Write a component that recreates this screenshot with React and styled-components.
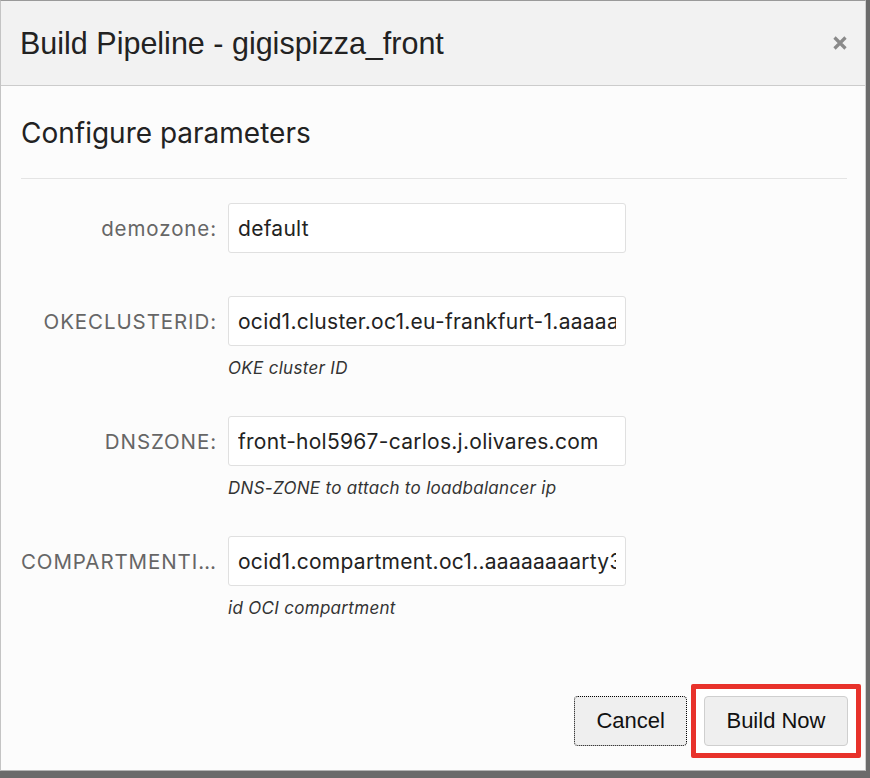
import React from "react";
import styled, { createGlobalStyle } from "styled-components";

const GlobalStyle = createGlobalStyle`
  html, body {
    margin: 0;
    padding: 0;
    background: #6b6b6b;
  }
  * {
    box-sizing: border-box;
  }
`;

const Dialog = styled.div`
  width: 866px;
  height: 771px;
  display: flex;
  flex-direction: column;
  background: #fcfcfc;
  border-left: 1px solid #c4c4c4;
  border-top: 1px solid #9a9a9a;
  border-bottom: 1px solid #b5b5b5;
  border-right: 1px solid #d0d0d0;
`;

const Header = styled.div`
  height: 85px;
  flex-shrink: 0;
  display: flex;
  align-items: center;
  justify-content: space-between;
  padding: 0 11px 0 19px;
  background: #f2f2f2;
  border-bottom: 1px solid #cccccc;
`;

const Title = styled.h1`
  margin: 0;
  font-family: "Liberation Sans", Arial, sans-serif;
  font-weight: 400;
  font-size: 30.5px;
  color: #222;
`;

const CloseButton = styled.button`
  width: 28px;
  height: 28px;
  padding: 0;
  border: none;
  background: transparent;
  display: flex;
  align-items: center;
  justify-content: center;
  cursor: pointer;
`;

const Body = styled.div`
  flex: 1;
  display: flex;
  flex-direction: column;
  padding: 30px 18px 0 20px;
`;

const SectionHead = styled.h2`
  margin: 0;
  font-family: Inter, "Noto Sans", sans-serif;
  font-weight: 400;
  font-size: 28px;
  line-height: 34px;
  color: #222;
`;

const Divider = styled.hr`
  margin: 28px 0 24px 0;
  border: none;
  border-top: 1px solid #e4e4e4;
`;

const Form = styled.div`
  display: flex;
  flex-direction: column;
`;

const FieldRow = styled.div`
  display: grid;
  grid-template-columns: 196px 398px;
  column-gap: 11px;
  align-items: center;
  margin-bottom: ${(p) => p.$space}px;
`;

const Label = styled.label`
  font-family: Inter, "Noto Sans", sans-serif;
  font-size: 20.5px;
  letter-spacing: 0.9px;
  color: #666;
  text-align: right;
  white-space: nowrap;
  overflow: hidden;
  text-overflow: ellipsis;
`;

const Input = styled.input`
  width: 100%;
  height: 50px;
  padding: 0 9px;
  background: #fff;
  border: 1px solid #e0e0e0;
  border-radius: 3px;
  font-family: Inter, "Noto Sans", sans-serif;
  font-size: 21px;
  letter-spacing: 0.27px;
  color: #222;
  outline: none;
`;

const Help = styled.div`
  grid-column: 2;
  margin-top: 10px;
  font-family: Inter, "Noto Sans", sans-serif;
  font-style: italic;
  font-size: 17px;
  letter-spacing: 0.3px;
  line-height: 24px;
  color: #333;
`;

const Footer = styled.div`
  flex-shrink: 0;
  display: flex;
  justify-content: flex-end;
  align-items: center;
  gap: 4px;
  padding: 0 4px 12px 0;
`;

const Button = styled.button`
  height: 50px;
  padding: 0 ${(p) => p.$pad}px;
  background: #efefef;
  border: 1px ${(p) => (p.$focused ? "dotted #000" : "solid #cfcfcf")};
  border-radius: 4px;
  font-family: "Liberation Sans", Arial, sans-serif;
  font-size: 22px;
  color: #111;
  cursor: pointer;
`;

const Highlight = styled.div`
  border: 5px solid #e8322b;
  border-radius: 2px;
  padding: 7px 8px;
  background: #fff;
`;

const fields = [
  { label: "demozone:", value: "default", space: 43 },
  {
    label: "OKECLUSTERID:",
    value: "ocid1.cluster.oc1.eu-frankfurt-1.aaaaaaaaaeztsnbtgq4dcmjqgrsdkzbr",
    help: "OKE cluster ID",
    space: 36,
  },
  {
    label: "DNSZONE:",
    value: "front-hol5967-carlos.j.olivares.com",
    help: "DNS-ZONE to attach to loadbalancer ip",
    space: 36,
  },
  {
    label: "COMPARTMENTID:",
    value: "ocid1.compartment.oc1..aaaaaaaarty3xqjnd",
    help: "id OCI compartment",
    space: 0,
  },
];

export default function App() {
  return (
    <>
      <GlobalStyle />
      <Dialog>
        <Header>
          <Title>Build Pipeline - gigispizza_front</Title>
          <CloseButton aria-label="close">
            <svg width="16" height="16" viewBox="0 0 16 16">
              <path d="M2.5 2.5 L13.5 13.5 M13.5 2.5 L2.5 13.5" stroke="#8a8a8a" strokeWidth="3.2" />
            </svg>
          </CloseButton>
        </Header>
        <Body>
          <SectionHead>Configure parameters</SectionHead>
          <Divider />
          <Form>
            {fields.map((f) => (
              <FieldRow key={f.label} $space={f.space}>
                <Label>{f.label}</Label>
                <Input readOnly value={f.value} />
                {f.help && <Help>{f.help}</Help>}
              </FieldRow>
            ))}
          </Form>
        </Body>
        <Footer>
          <Button $focused $pad={21}>Cancel</Button>
          <Highlight>
            <Button $pad={21.5}>Build Now</Button>
          </Highlight>
        </Footer>
      </Dialog>
    </>
  );
}
